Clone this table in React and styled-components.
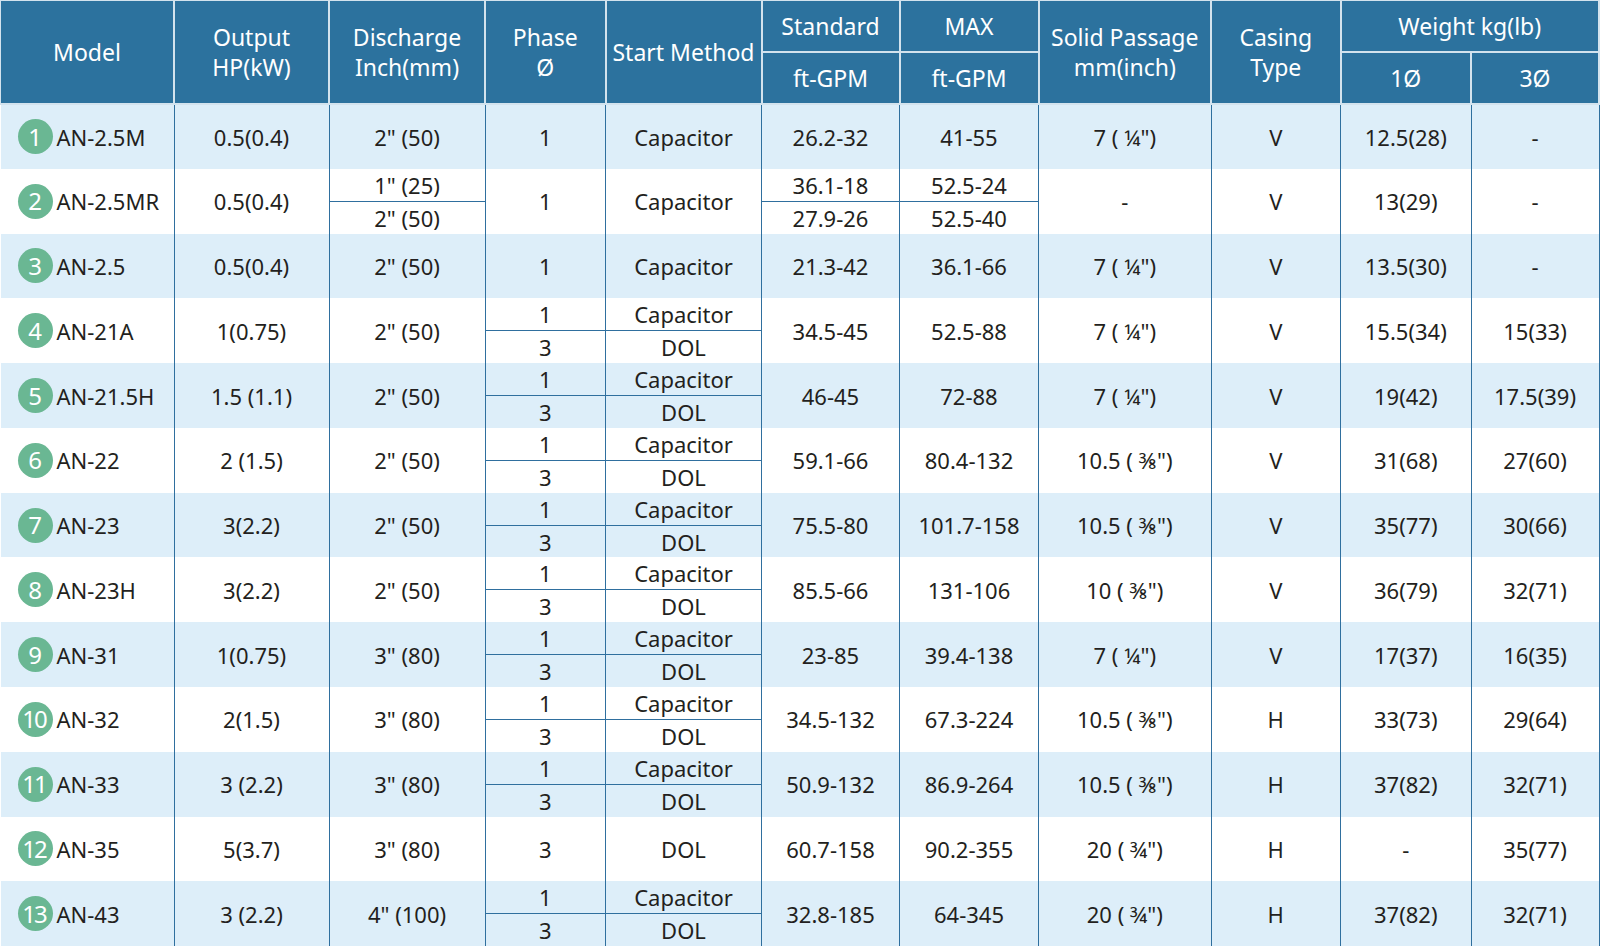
import React from 'react'
import styled, {createGlobalStyle} from 'styled-components'

const GlobalStyle = createGlobalStyle`
    html, body {
        margin: 0;
        padding: 0;
        background: #ffffff;
    }
    body {
        font-family: "Noto Sans", "Open Sans", sans-serif;
    }
`

const HEAD_BG = '#2c729e'
const HEAD_LINE = '#d3e3ee'
const BODY_LINE = '#2f6f9e'
const SHADE = '#ddeef9'

const Table = styled.table`
    width: 1600px;
    table-layout: fixed;
    border-collapse: collapse;
    color: #231f20;
`

const HeadCell = styled.th`
    background: ${HEAD_BG};
    color: #ffffff;
    font-weight: 400;
    font-size: 23px;
    line-height: 30px;
    text-align: center;
    vertical-align: middle;
    padding: 0;
    height: 50px;
    border: 2px solid ${HEAD_LINE};
    border-top-width: 1px;
`

const BodyRow = styled.tr`
    height: 32.4px;
    background: ${p => (p.$shade ? SHADE : '#ffffff')};
`

const Cell = styled.td`
    padding: 0;
    font-size: 22px;
    line-height: 1;
    text-align: center;
    vertical-align: middle;
    border-left: 1.5px solid ${BODY_LINE};
    border-right: 1.5px solid ${BODY_LINE};
    border-bottom: ${p => (p.$split ? `1px solid ${BODY_LINE}` : 'none')};
    white-space: nowrap;
`

const ModelCell = styled(Cell)`
    text-align: left;
    padding-left: 17px;
    border-left: none;
`

const ModelWrap = styled.div`
    display: flex;
    align-items: center;
    gap: 4px;
`

const Badge = styled.span`
    display: inline-flex;
    align-items: center;
    justify-content: center;
    width: 35px;
    height: 35px;
    border-radius: 50%;
    background: #6ab793;
    color: #ffffff;
    font-size: 24px;
    letter-spacing: ${p => (p.$wide ? '-2px' : '0')};
    text-indent: ${p => (p.$wide ? '-2px' : '0')};
    flex-shrink: 0;
`

const CAP = 'Capacitor'
const SPLIT_PHASE = ['1', '3']
const SPLIT_START = [CAP, 'DOL']

const models = [
    ['AN-2.5M', '0.5(0.4)', '2" (50)', '1', CAP, '26.2-32', '41-55', '7 ( ¼")', 'V', '12.5(28)', '-'],
    ['AN-2.5MR', '0.5(0.4)', ['1" (25)', '2" (50)'], '1', CAP, ['36.1-18', '27.9-26'], ['52.5-24', '52.5-40'], '-', 'V', '13(29)', '-'],
    ['AN-2.5', '0.5(0.4)', '2" (50)', '1', CAP, '21.3-42', '36.1-66', '7 ( ¼")', 'V', '13.5(30)', '-'],
    ['AN-21A', '1(0.75)', '2" (50)', SPLIT_PHASE, SPLIT_START, '34.5-45', '52.5-88', '7 ( ¼")', 'V', '15.5(34)', '15(33)'],
    ['AN-21.5H', '1.5 (1.1)', '2" (50)', SPLIT_PHASE, SPLIT_START, '46-45', '72-88', '7 ( ¼")', 'V', '19(42)', '17.5(39)'],
    ['AN-22', '2 (1.5)', '2" (50)', SPLIT_PHASE, SPLIT_START, '59.1-66', '80.4-132', '10.5 ( ⅜")', 'V', '31(68)', '27(60)'],
    ['AN-23', '3(2.2)', '2" (50)', SPLIT_PHASE, SPLIT_START, '75.5-80', '101.7-158', '10.5 ( ⅜")', 'V', '35(77)', '30(66)'],
    ['AN-23H', '3(2.2)', '2" (50)', SPLIT_PHASE, SPLIT_START, '85.5-66', '131-106', '10 ( ⅜")', 'V', '36(79)', '32(71)'],
    ['AN-31', '1(0.75)', '3" (80)', SPLIT_PHASE, SPLIT_START, '23-85', '39.4-138', '7 ( ¼")', 'V', '17(37)', '16(35)'],
    ['AN-32', '2(1.5)', '3" (80)', SPLIT_PHASE, SPLIT_START, '34.5-132', '67.3-224', '10.5 ( ⅜")', 'H', '33(73)', '29(64)'],
    ['AN-33', '3 (2.2)', '3" (80)', SPLIT_PHASE, SPLIT_START, '50.9-132', '86.9-264', '10.5 ( ⅜")', 'H', '37(82)', '32(71)'],
    ['AN-35', '5(3.7)', '3" (80)', '3', 'DOL', '60.7-158', '90.2-355', '20 ( ¾")', 'H', '-', '35(77)'],
    ['AN-43', '3 (2.2)', '4" (100)', SPLIT_PHASE, SPLIT_START, '32.8-185', '64-345', '20 ( ¾")', 'H', '37(82)', '32(71)'],
]

const widths = [173.5, 155, 156, 120.5, 156, 138, 139, 172.5, 129.5, 130.5]

const ModelRows = ({index, row}) => {
    const [name, ...fields] = row
    const shade = index % 2 === 0
    return (
        <>
            <BodyRow $shade={shade}>
                <ModelCell rowSpan={2}>
                    <ModelWrap>
                        <Badge $wide={index + 1 >= 10}>{index + 1}</Badge>
                        <span>{name}</span>
                    </ModelWrap>
                </ModelCell>
                {fields.map((f, i) =>
                    Array.isArray(f)
                        ? <Cell key={i} $split>{f[0]}</Cell>
                        : <Cell key={i} rowSpan={2}>{f}</Cell>
                )}
            </BodyRow>
            <BodyRow $shade={shade}>
                {fields.map((f, i) =>
                    Array.isArray(f) ? <Cell key={i}>{f[1]}</Cell> : null
                )}
            </BodyRow>
        </>
    )
}

const App = () => {
    return (
        <>
            <GlobalStyle />
            <Table>
                <colgroup>
                    {widths.map((w, i) => <col key={i} style={{width: w}} />)}
                </colgroup>
                <thead>
                    <tr>
                        <HeadCell rowSpan={2} style={{borderLeftWidth: 1}}>Model</HeadCell>
                        <HeadCell rowSpan={2}>Output<br />HP(kW)</HeadCell>
                        <HeadCell rowSpan={2}>Discharge<br />Inch(mm)</HeadCell>
                        <HeadCell rowSpan={2}>Phase<br />Ø</HeadCell>
                        <HeadCell rowSpan={2}>Start Method</HeadCell>
                        <HeadCell>Standard</HeadCell>
                        <HeadCell>MAX</HeadCell>
                        <HeadCell rowSpan={2}>Solid Passage<br />mm(inch)</HeadCell>
                        <HeadCell rowSpan={2}>Casing<br />Type</HeadCell>
                        <HeadCell colSpan={2}>Weight kg(lb)</HeadCell>
                    </tr>
                    <tr>
                        <HeadCell>ft-GPM</HeadCell>
                        <HeadCell>ft-GPM</HeadCell>
                        <HeadCell>1Ø</HeadCell>
                        <HeadCell>3Ø</HeadCell>
                    </tr>
                </thead>
                <tbody>
                    {models.map((row, i) => (
                        <ModelRows key={row[0]} index={i} row={row} />
                    ))}
                </tbody>
            </Table>
        </>
    )
}

export default App
